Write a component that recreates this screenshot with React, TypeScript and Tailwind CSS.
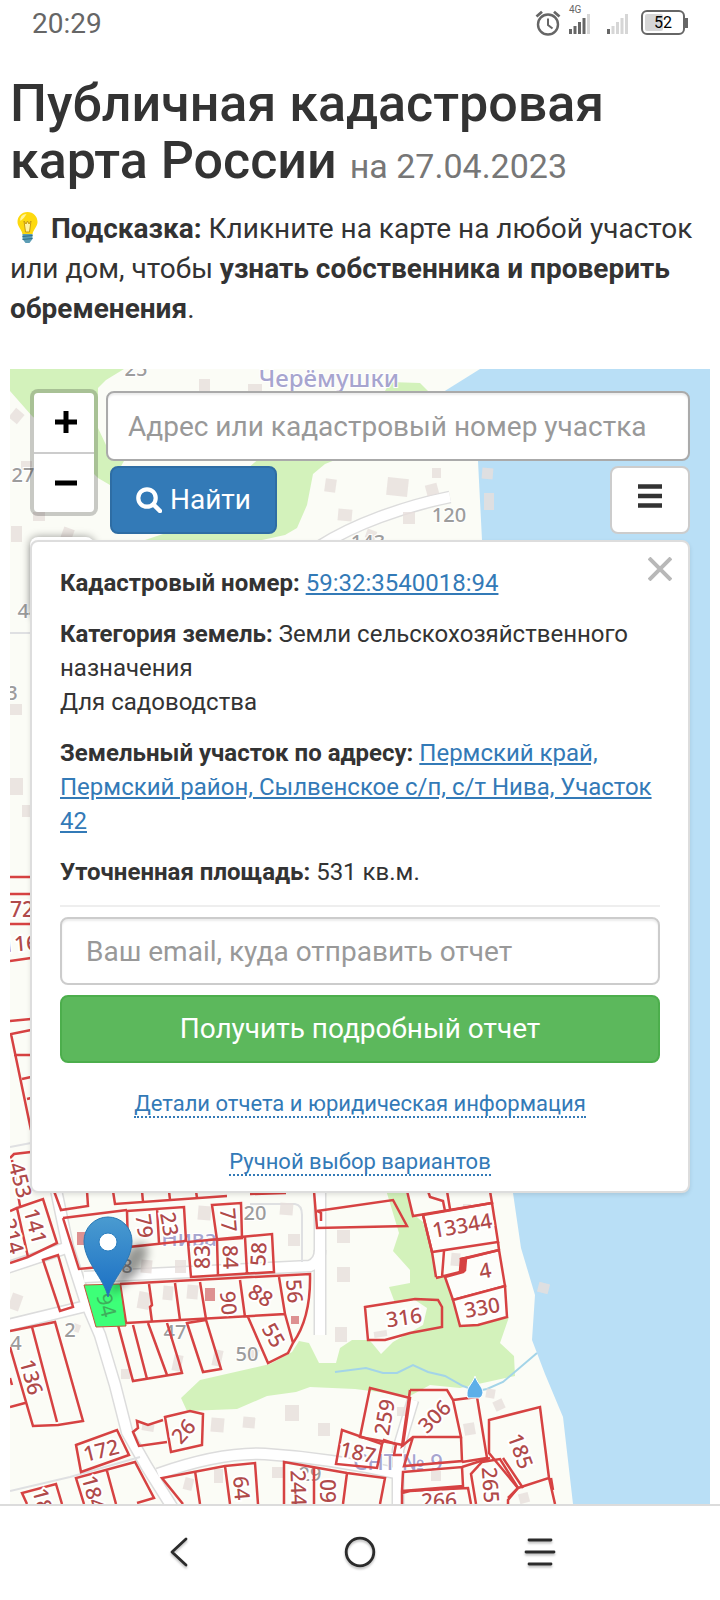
// App.tsx
import { useState } from "react";

// Grey houses on the base layer: x, y, width, height, tilt
const buildings = [
  [199, 379, 11, 12, 0], [248, 384, 14, 10, 0], [11, 410, 11, 12, 40], [21, 461, 11, 9, 0],
  [33, 512, 12, 9, 0], [11, 526, 11, 16, 0], [62, 528, 11, 12, 20], [325, 479, 11, 13, 8],
  [338, 509, 14, 12, 5], [387, 478, 21, 18, 6], [426, 484, 12, 11, -15], [403, 512, 12, 12, 0],
  [432, 468, 9, 10, 0], [366, 530, 10, 9, 20], [10, 704, 12, 11, 0], [10, 778, 13, 17, 0],
  [22, 805, 9, 12, 0], [10, 1294, 11, 16, 20], [141, 1260, 11, 13, 5], [175, 1260, 11, 13, 0],
  [198, 1206, 13, 14, 5], [280, 1203, 13, 12, 5], [288, 1234, 12, 12, 0], [337, 1230, 13, 13, 0],
  [337, 1267, 13, 15, 0], [335, 1327, 12, 15, 0], [138, 1292, 12, 17, 10], [163, 1286, 10, 14, 5],
  [187, 1285, 11, 14, 5], [173, 1355, 9, 16, 12], [213, 1350, 9, 16, 12], [121, 1369, 9, 10, 0],
  [247, 1348, 11, 12, 20], [211, 1418, 13, 14, 5], [243, 1417, 12, 11, 5], [285, 1405, 14, 16, 0],
  [318, 1423, 12, 13, 0], [142, 1424, 12, 7, 10], [184, 1478, 9, 12, 15], [214, 1469, 9, 14, 0],
  [272, 1467, 11, 11, 0], [397, 1407, 9, 9, 0], [486, 1389, 9, 9, 10], [494, 1400, 10, 10, -25],
  [464, 1423, 11, 12, -10], [431, 1471, 10, 10, 0], [519, 1493, 10, 10, -15], [538, 1283, 11, 10, 15],
  [451, 1253, 9, 13, 5], [479, 1281, 10, 9, 0], [482, 468, 11, 11, 5], [484, 493, 10, 17, 0],
  [73, 1324, 7, 8, 20], [374, 1331, 13, 6, -8], [463, 1204, 8, 10, 0],
];

// Parcel borders of the cadastral layer
const parcels = [
  "M10 877H31M10 894H31M10 924H31M10 961L31 958M10 1021L31 1019M31 1030L11 1034L31 1130M14 1055H31M22 1079L31 1077M27 1099L31 1098",
  "M10 1158L14 1154L31 1152M12 1160L20 1206M17 1208L43 1199L57 1243L28 1257ZM10 1211L17 1208M28 1257L10 1263",
  "M54 1191L61 1210L88 1206L87 1191M113 1191L115 1204L227 1196M142 1191L143 1202M169 1191L170 1200M196 1191L197 1198M250 1194L286 1193",
  "M63 1218L127 1210M63 1218L79 1269L100 1267",
  "M127 1211L184 1207L186 1241L128 1247ZM157 1208L159 1243",
  "M212 1205L241 1203L242 1238L217 1240Z",
  "M188 1242L272 1234L274 1272L191 1277ZM217 1240L218 1276M245 1237L247 1273",
  "M120 1284L310 1274Q311 1318 293 1343L288 1353L268 1363L248 1317M126 1323L285 1314L279 1277M293 1343L285 1314",
  "M120 1284L126 1323M149 1284L152 1305L150 1307L152 1322M175 1283L180 1320M200 1282L206 1319M240 1280L245 1317",
  "M118 1325L133 1381L182 1373L179 1362L167 1323M133 1325L147 1379M148 1323L167 1375",
  "M187 1323L203 1372L221 1369L206 1320Z",
  "M43 1260L58 1255L73 1307L60 1311Z",
  "M10 1331L55 1322L83 1421L58 1425L33 1426L10 1347M32 1327L57 1422M10 1407L25 1403M10 1378L12 1385",
  "M76 1445L117 1430L129 1455L81 1472Z",
  "M165 1417L190 1411L203 1414L202 1445L171 1452ZM163 1420L148 1425L137 1421L138 1428L133 1432L139 1446L167 1442",
  "M27 1504L22 1493L56 1484L62 1504M84 1504L76 1478L135 1462L154 1498L137 1503M107 1471L116 1504",
  "M183 1504L162 1478L225 1466L255 1463L258 1504M195 1471L200 1504M225 1466L230 1504",
  "M284 1504V1462L347 1473L385 1478L380 1504M314 1467V1504M347 1473L343 1504",
  "M314 1191L317 1228L407 1226L393 1200L317 1211M317 1211L321 1213V1221",
  "M370 1388L410 1398L403 1445L360 1437Z",
  "M342 1430L382 1444L377 1468L336 1464ZM382 1444L384 1440L396 1444L394 1455H402",
  "M410 1390H447L453 1400L461 1437H413L402 1446L410 1390M413 1437L404 1466L462 1461L461 1437M453 1400L477 1397L487 1458L462 1462",
  "M403 1472L462 1467L463 1486L402 1491ZM402 1504V1493L410 1491L468 1488L471 1504M462 1467L490 1458",
  "M476 1504L471 1474L482 1462L500 1459L518 1488L508 1500V1504M503 1458L523 1488",
  "M489 1420L540 1407L549 1478L518 1488L489 1453ZM549 1478L555 1504M518 1488L508 1498M551 1478L553 1490",
  "M407 1191L413 1216L492 1203L490 1191M428 1191L430 1197L443 1201L445 1211M447 1191L450 1209",
  "M436 1277L432 1252L423 1215M442 1277L444 1251M436 1278L464 1271L461 1259L499 1250M498 1242L499 1250",
];

// Parcels that cover the forest with their own ground colour
const filledParcels = [
  "M423 1215L492 1203L498 1242L432 1252Z",
  "M445 1277L463 1272V1259L499 1250L505 1286L453 1300Z",
  "M453 1300L505 1286L507 1317L478 1325L460 1326Z",
];

const parcelLabels = [
  { text: "72", x: 22, y: 909, r: 0 }, { text: "116", x: 20, y: 943, r: -5 },
  { text: "453", x: 21, y: 1180, r: 75 }, { text: "214", x: 13, y: 1236, r: 75 },
  { text: "141", x: 36, y: 1226, r: 75 }, { text: "79", x: 145, y: 1226, r: 82 },
  { text: "23", x: 170, y: 1224, r: 80 }, { text: "77", x: 229, y: 1220, r: 85 },
  { text: "83", x: 202, y: 1257, r: -90 }, { text: "84", x: 231, y: 1257, r: 88 },
  { text: "58", x: 258, y: 1254, r: -87 }, { text: "90", x: 229, y: 1303, r: 85 },
  { text: "88", x: 261, y: 1295, r: 30 }, { text: "56", x: 295, y: 1291, r: 85 },
  { text: "55", x: 274, y: 1335, r: 60 }, { text: "136", x: 32, y: 1377, r: 75 },
  { text: "172", x: 101, y: 1450, r: -14 }, { text: "26", x: 183, y: 1431, r: -48 },
  { text: "18", x: 43, y: 1500, r: 75 }, { text: "184", x: 94, y: 1493, r: 75 },
  { text: "64", x: 242, y: 1488, r: 85 }, { text: "244", x: 299, y: 1488, r: 88 },
  { text: "60", x: 328, y: 1491, r: -90 }, { text: "316", x: 404, y: 1317, r: -8 },
  { text: "259", x: 384, y: 1417, r: -80 }, { text: "187", x: 358, y: 1452, r: 12 },
  { text: "306", x: 434, y: 1416, r: -45 }, { text: "266", x: 439, y: 1500, r: -2 },
  { text: "265", x: 491, y: 1485, r: 86 }, { text: "185", x: 521, y: 1451, r: 70 },
  { text: "13344", x: 462, y: 1225, r: -10 }, { text: "4", x: 485, y: 1270, r: -10 },
  { text: "330", x: 482, y: 1307, r: -10 },
];

const houseNumbers = [
  { text: "25", x: 136, y: 368 }, { text: "27", x: 23, y: 474 }, { text: "120", x: 449, y: 514 },
  { text: "143", x: 368, y: 541 }, { text: "44", x: 29, y: 610 }, { text: "3", x: 12, y: 692 },
  { text: "20", x: 255, y: 1212 }, { text: "8", x: 127, y: 1265 }, { text: "2", x: 70, y: 1329 },
  { text: "4", x: 16, y: 1342 }, { text: "47", x: 175, y: 1331 }, { text: "50", x: 247, y: 1353 },
  { text: "29", x: 310, y: 1473 },
];

const roads = [
  "M320 546Q345 530 380 517T450 497",
  "M55 1185L68 1247L85 1300L100 1335L115 1385L127 1432L147 1467L174 1510",
  "M0 1270L66 1248", "M0 1327L86 1306",
  "M84 1277L190 1272L310 1266Q320 1262 320 1250",
  "M320 1180V1335",
  "M158 1474Q220 1452 265 1454Q330 1458 400 1474",
  "M413 1400L398 1450V1510",
];

const CadastralMap = () => (
  <svg
    className="absolute inset-0 h-full w-full"
    viewBox="10 369 700 1135"
    preserveAspectRatio="xMinYMin slice"
    fontFamily="'Noto Sans', sans-serif"
    aria-hidden="true"
  >
    <defs>
      <linearGradient id="pin" x1="0" y1="0" x2="0" y2="1">
        <stop offset="0" stopColor="#4a9bd0" />
        <stop offset="1" stopColor="#1a6fc4" />
      </linearGradient>
      <filter id="soft" x="-50%" y="-50%" width="200%" height="200%">
        <feGaussianBlur stdDeviation="5" />
      </filter>
    </defs>
    <rect x="10" y="369" width="700" height="1135" fill="#fbfcf6" />

    {/* forest */}
    <g fill="#d3f2bb">
      <path d="M10 369H124L106 380L98 388V428L106 445L124 461L110 485L98 478L60 440L32 416L10 391Z" />
      <path d="M262 456H345L325 464L313 474L307 505L297 528L285 535L262 540H145L175 530L240 520V475Z" />
      <path d="M390 382L420 383L428 391V400H380Z" />
      <path d="M386 1190L399 1233L393 1251L410 1270V1283L389 1287L395 1303L365 1307L368 1340L352 1340L340 1348L336 1363H319L309 1343L299 1341L292 1352L270 1364L200 1380L181 1398L187 1411L237 1409L267 1396L296 1392L310 1387L355 1389L410 1396L430 1385L460 1388L515 1376L514 1356L500 1343L509 1317L478 1326H460L450 1277L436 1277L432 1252L423 1222L413 1214L405 1190Z" />
    </g>
    <path d="M366 1307L415 1300L427 1308L423 1325L393 1342L381 1354L372 1343L367 1338Z" fill="#fbfcf6" />

    {/* water */}
    <path d="M480 369L440 394L478 461L482 540L495 800L513 1193L521 1248L535 1295L532 1340L545 1374L563 1417L573 1504H710V369Z" fill="#b9dff6" />
    <path d="M335 1372L366 1368L383 1373H397L413 1365L428 1372L445 1376L463 1386L477 1391L487 1389L503 1382L537 1353" fill="none" stroke="#a3d4e8" strokeWidth="2" />

    {/* roads */}
    <g fill="none" strokeLinejoin="round">
      {roads.map((d) => <path key={d} d={d} stroke="#dcdcdc" strokeWidth="13" />)}
      {roads.map((d) => <path key={d} d={d} stroke="#ffffff" strokeWidth="10" />)}
      <path d="M10 633L31 633M10 1491L70 1477L140 1457M10 1147L31 1143M250 1204H295Q302 1205 302 1215V1262" stroke="#dfe0e2" strokeWidth="2" />
    </g>

    {buildings.map(([x, y, w, h, r]) => (
      <rect
        key={`${x}-${y}`}
        x={x}
        y={y}
        width={w}
        height={h}
        fill="#e7dfdc"
        opacity="0.8"
        transform={`rotate(${r} ${x + w / 2} ${y + h / 2})`}
      />
    ))}
    <g fill="#dd9191">
      <rect x="205" y="1288" width="10" height="13" />
      <rect x="291" y="1316" width="8" height="8" />
      <rect x="77" y="1232" width="8" height="13" />
    </g>

    <g fill="#9c9c9c" fontSize="20" fontWeight="500" textAnchor="middle" stroke="#ffffff" strokeWidth="2" paintOrder="stroke">
      {houseNumbers.map((n) => (
        <text key={`${n.text}-${n.x}`} x={n.x} y={n.y} dominantBaseline="central">{n.text}</text>
      ))}
    </g>
    <g fill="#a7a5cf" fontWeight="500" stroke="#ffffff" strokeWidth="2" paintOrder="stroke" textAnchor="middle">
      <text x="329" y="387" fontSize="24">Черёмушки</text>
      <text x="189" y="1246" fontSize="22">Нива</text>
      <text x="398" y="1470" fontSize="22">СНТ № 9</text>
    </g>

    {/* cadastral layer */}
    <g fill="#fdfdfa" stroke="#d64242" strokeWidth="2.500">
      {filledParcels.map((d) => <path key={d} d={d} />)}
    </g>
    <g fill="none" stroke="#d64242" strokeWidth="2.500">
      {parcels.map((d) => <path key={d} d={d} />)}
      <path d="M365 1307L415 1299L438 1300L442 1307V1327L410 1333L385 1340L368 1340Z" />
      <path d="M461 1259L466 1258L465 1270L460 1271Z" fill="#d64242" />
    </g>
    <g fill="#b04a4a" fontSize="21" fontWeight="500" textAnchor="middle" stroke="#ffffff" strokeWidth="4" paintOrder="stroke">
      {parcelLabels.map((l) => (
        <text
          key={`${l.text}-${l.x}`}
          x={l.x}
          y={l.y}
          dominantBaseline="central"
          transform={`rotate(${l.r} ${l.x} ${l.y})`}
        >
          {l.text}
        </text>
      ))}
    </g>

    {/* spring */}
    <path d="M475 1376C477 1383 483 1387 483 1393A8 8 0 0 1 480 1398L468 1398A8 8 0 0 1 467 1393C467 1387 473 1383 475 1376Z" fill="#5dafe8" stroke="#ffffff" strokeWidth="1" />

    {/* selected parcel and its pin */}
    <path d="M84 1285L120 1284L126 1326L96 1327Z" fill="#3dff78" stroke="#c3543c" strokeWidth="1" />
    <text x="107" y="1305" fontSize="21" fill="#3fae5c" textAnchor="middle" dominantBaseline="central" transform="rotate(75 107 1305)">94</text>
    <path d="M110 1296L122 1262Q130 1240 146 1244Q152 1258 134 1276Z" fill="#000000" opacity="0.4" filter="url(#soft)" />
    <path d="M108 1297C104 1278 84 1262 84 1241A24 24 0 0 1 132 1241C132 1262 112 1278 108 1297Z" fill="url(#pin)" stroke="#2a78b5" strokeWidth="1" />
    <circle cx="108" cy="1242" r="9" fill="#ffffff" stroke="#2c7fc0" strokeWidth="1" />
  </svg>
);

const SignalBars = ({ level }: { level: number }) => (
  <svg className="h-5 w-[22px]" viewBox="0 0 22 20" aria-hidden="true">
    {[5, 8, 12, 16, 20].map((h, i) => (
      <rect key={h} x={i * 4.5} y={20 - h} width="3" height={h} fill={i < level ? "#666666" : "#d6d6d6"} />
    ))}
  </svg>
);

const StatusBar = () => (
  <header className="flex h-[67px] items-start justify-between px-8 pt-1.5 text-[#666666]">
    <span className="text-[28px] leading-9">20:29</span>
    <div className="flex items-start pt-1">
      <svg className="mr-2 h-[26px] w-[26px]" viewBox="0 0 26 26" fill="none" stroke="#666666" strokeWidth="2.4" aria-hidden="true">
        <circle cx="13" cy="14.5" r="10" />
        <path d="M13 8.5V15L17.5 18.5" strokeWidth="2" />
        <path d="M1.5 6.5L7 1.8M24.5 6.5L19 1.8" strokeWidth="2.8" />
      </svg>
      <div className="relative mr-4 pt-1">
        <span className="absolute -top-1.5 left-0 text-[10px] leading-3">4G</span>
        <SignalBars level={4} />
      </div>
      <div className="mr-3 pt-1">
        <SignalBars level={1} />
      </div>
      <div className="flex items-center">
        <div className="relative flex h-[25px] w-11 items-center justify-center rounded-md border-2 border-[#666666]">
          <div className="absolute inset-y-0.5 left-0.5 w-[18px] rounded-xs bg-[#d6d6d6]" />
          <span className="relative text-base leading-5 text-black">52</span>
        </div>
        <div className="h-[10px] w-[3px] bg-[#666666]" />
      </div>
    </div>
  </header>
);

const Bulb = () => (
  <svg className="mr-2.5 ml-1 inline-block h-8 w-[27px] align-[-6px]" viewBox="0 0 26 32" aria-hidden="true">
    <path d="M13 0C7 0 3 4.500 3 10C3 15 7.500 17.500 8 22.500H18C18.500 17.500 23 15 23 10C23 4.500 19 0 13 0Z" fill="#fdd90f" />
    <path d="M7 4Q9 2 12 2Q10 6 6 9Q5 7 7 4Z" fill="#fff59d" />
    <path d="M9.500 9L11.500 12L13 9L14.500 12L16.500 9L15 20H11Z" fill="#fff3a0" stroke="#c79a12" strokeWidth="1" />
    <path d="M8 22H18V27L15 31H11L8 27Z" fill="#5c9db5" />
    <path d="M8 24.500L18 23.500M8 27.500L18 26.500" stroke="#2f6f8c" strokeWidth="1" />
  </svg>
);

const App = () => {
  const [address, setAddress] = useState("");
  const [email, setEmail] = useState("");
  const [popupOpen, setPopupOpen] = useState(true);

  return (
    <div className="flex min-h-screen flex-col bg-white font-[Roboto,sans-serif] text-[#333333]">
      <StatusBar />

      <main className="flex flex-1 flex-col px-2.5">
        <h1 className="pt-2 text-[52px] leading-[57px] font-medium">
          Публичная кадастровая карта России{" "}
          <small className="text-[34px] leading-none font-normal text-[#777777]">на 27.04.2023</small>
        </h1>
        <p className="mt-5 mb-10 text-[28px] leading-10">
          <Bulb />
          <b>Подсказка:</b> Кликните на карте на любой участок или дом, чтобы{" "}
          <b>узнать собственника и проверить обременения</b>.
        </p>

        <section className="relative flex-1 overflow-hidden p-5">
          <CadastralMap />

          <div className="relative flex gap-2">
            <div className="flex h-[127px] w-[68px] flex-col overflow-hidden rounded-lg border-4 border-black/20 bg-white bg-clip-padding">
              <button className="flex flex-1 items-center justify-center border-b-2 border-[#cccccc] pl-1" aria-label="Приблизить">
                <svg className="h-[22px] w-[22px]" viewBox="0 0 22 22" stroke="#000000" strokeWidth="5">
                  <path d="M11 0V22M0 11H22" />
                </svg>
              </button>
              <button className="flex flex-1 items-center justify-center pl-1" aria-label="Отдалить">
                <svg className="h-[22px] w-[22px]" viewBox="0 0 22 22" stroke="#000000" strokeWidth="5">
                  <path d="M0 11H22" />
                </svg>
              </button>
            </div>
            {/* layers control, mostly hidden by the popup */}
            <div className="absolute top-[148px] left-0 h-20 w-16 rounded-lg bg-white shadow-[0_0_8px_rgba(0,0,0,0.4)]" />

            <form className="min-w-0 flex-1 pt-0.5" onSubmit={(e) => e.preventDefault()}>
              <input
                type="text"
                aria-label="Адрес или кадастровый номер участка"
                placeholder="Адрес или кадастровый номер участка"
                value={address}
                onChange={(e) => setAddress(e.target.value)}
                className="h-[70px] w-full rounded-lg border-2 border-[#aaaaaa] bg-white px-5 text-[28px] shadow-[inset_0_2px_2px_rgba(0,0,0,0.08)] placeholder:text-[#999999]"
              />
              <div className="mt-[5px] flex items-center justify-between pl-1">
                <button
                  type="submit"
                  className="flex h-[68px] items-center gap-2 rounded-lg border-2 border-[#2e6da4] bg-[#337ab7] px-6 text-[28px] text-white"
                >
                  <svg className="h-[26px] w-[26px]" viewBox="0 0 26 26" fill="none" stroke="#ffffff" aria-hidden="true">
                    <circle cx="11" cy="11" r="8.7" strokeWidth="4.200" />
                    <path d="M17.500 17.500L24 24" strokeWidth="4.500" strokeLinecap="round" />
                  </svg>
                  Найти
                </button>
                <button
                  type="button"
                  aria-label="Меню"
                  className="flex h-[68px] w-20 items-center justify-center rounded-lg border-2 border-[#cccccc] bg-white pb-2"
                >
                  <svg className="h-6 w-6" viewBox="0 0 24 24" stroke="#333333" strokeWidth="4.500">
                    <path d="M0 2.500H24M0 12H24M0 21.500H24" />
                  </svg>
                </button>
              </div>
            </form>
          </div>

          {popupOpen && (
            <div className="relative mt-1.5 rounded-lg border-2 border-[#dddddd] bg-white px-7 pt-6 pb-3 text-[24px] leading-[34px] shadow-[0_2px_4px_rgba(0,0,0,0.1)]">
              <button
                aria-label="Закрыть"
                onClick={() => setPopupOpen(false)}
                className="absolute top-[15px] right-4"
              >
                <svg className="h-6 w-6" viewBox="0 0 24 24" stroke="#b8b8b8" strokeWidth="4">
                  <path d="M1 1L23 23M23 1L1 23" />
                </svg>
              </button>

              <div className="space-y-[17px]">
                <p>
                  <b>Кадастровый номер:</b>{" "}
                  <a href="#number" className="text-[#337ab7] underline">59:32:3540018:94</a>
                </p>
                <p>
                  <b>Категория земель:</b> Земли сельскохозяйственного назначения
                  <br />
                  Для садоводства
                </p>
                <p>
                  <b>Земельный участок по адресу:</b>{" "}
                  <a href="#address" className="text-[#337ab7] underline">
                    Пермский край, Пермский район, Сылвенское с/п, с/т Нива, Участок 42
                  </a>
                </p>
                <p>
                  <b>Уточненная площадь:</b> 531 кв.м.
                </p>
              </div>

              <hr className="mt-4 mb-2.5 border-t-2 border-[#eeeeee]" />

              <form onSubmit={(e) => e.preventDefault()}>
                <input
                  type="email"
                  aria-label="Ваш email, куда отправить отчет"
                  placeholder="Ваш email, куда отправить отчет"
                  value={email}
                  onChange={(e) => setEmail(e.target.value)}
                  className="block h-[68px] w-full rounded-lg border-2 border-[#cccccc] px-6 text-[28px] shadow-[inset_0_2px_2px_rgba(0,0,0,0.08)] placeholder:text-[#999999]"
                />
                <button
                  type="submit"
                  className="mt-2.5 block h-[68px] w-full rounded-lg border-2 border-[#4cae4c] bg-[#5cb85c] text-[28px] text-white"
                >
                  Получить подробный отчет
                </button>
              </form>

              <div className="mt-6 flex flex-col items-center gap-6 text-[22px]">
                <p>
                  <a href="#details" className="border-b-2 border-dotted border-[#337ab7] text-[#337ab7]">
                    Детали отчета и юридическая информация
                  </a>
                </p>
                <p>
                  <a href="#manual" className="border-b-2 border-dotted border-[#337ab7] text-[#337ab7]">
                    Ручной выбор вариантов
                  </a>
                </p>
              </div>
            </div>
          )}
        </section>
      </main>

      <nav className="flex h-24 items-center justify-around border-t-2 border-[#dcdcdc] px-[90px] pb-0.5">
        <button aria-label="Назад" className="drop-shadow-[0_2px_1px_rgba(0,0,0,0.25)]">
          <svg className="h-8 w-8" viewBox="0 0 32 32" fill="none" stroke="#2b2b2b" strokeWidth="2.800" strokeLinecap="round" strokeLinejoin="round">
            <path d="M22 3L8 16L22 29" />
          </svg>
        </button>
        <button aria-label="Домой" className="drop-shadow-[0_2px_1px_rgba(0,0,0,0.25)]">
          <svg className="h-8 w-8" viewBox="0 0 32 32" fill="none" stroke="#2b2b2b" strokeWidth="2.800">
            <circle cx="16" cy="16" r="13.800" />
          </svg>
        </button>
        <button aria-label="Недавние" className="drop-shadow-[0_2px_1px_rgba(0,0,0,0.25)]">
          <svg className="h-8 w-8" viewBox="0 0 32 32" stroke="#2b2b2b" strokeWidth="2.800" strokeLinecap="round">
            <path d="M5 4H27M2 16H30M5 28H27" />
          </svg>
        </button>
      </nav>
    </div>
  );
};

export default App;
